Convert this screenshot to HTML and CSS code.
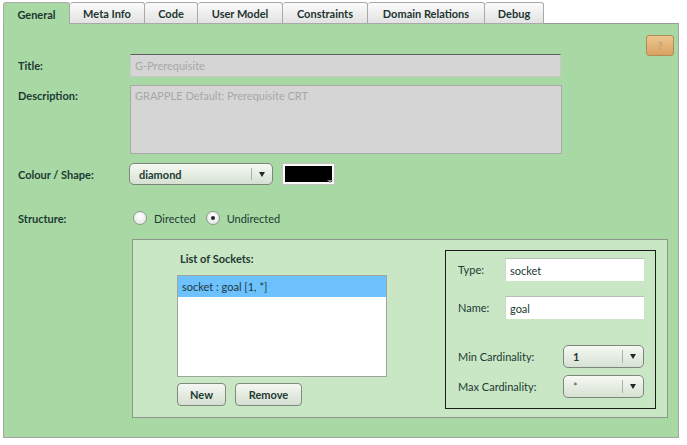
FILE: index.html
```html
<!DOCTYPE html>
<html>
<head>
<meta charset="utf-8">
<link rel="stylesheet" href="styles.css">
</head>
<body>
<div class="tabs">
  <div class="tab active t-general">General</div>
  <div class="tab t-meta">Meta Info</div>
  <div class="tab t-code">Code</div>
  <div class="tab t-um">User Model</div>
  <div class="tab t-con">Constraints</div>
  <div class="tab t-dom">Domain Relations</div>
  <div class="tab t-debug">Debug</div>
</div>
<div class="panel">
  <div class="toolbar"><div class="help">?</div></div>
  <div class="row row-title">
    <div class="label">Title:</div>
    <div class="input disabled title-input">G-Prerequisite</div>
  </div>
  <div class="row row-desc">
    <div class="label label-top">Description:</div>
    <div class="textarea disabled">GRAPPLE Default: Prerequisite CRT</div>
  </div>
  <div class="row row-colour">
    <div class="label">Colour / Shape:</div>
    <div class="colour-field">
      <div class="dropdown shape-dd"><span class="dd-value">diamond</span><span class="dd-arrow"><i class="tri"></i></span></div>
      <div class="swatch"><i class="swatch-tri"></i></div>
    </div>
  </div>
  <div class="row row-struct">
    <div class="label">Structure:</div>
    <div class="radios">
      <span class="radio"></span><span class="radio-label">Directed</span>
      <span class="radio checked"></span><span class="radio-label">Undirected</span>
    </div>
  </div>
  <div class="inner">
    <div class="sockets">
      <div class="sockets-title">List of Sockets:</div>
      <div class="listbox">
        <div class="list-item selected">socket : goal [1, *]</div>
      </div>
      <div class="buttons">
        <div class="btn btn-new">New</div>
        <div class="btn btn-remove">Remove</div>
      </div>
    </div>
    <div class="props">
      <div class="prop-row">
        <div class="prop-label">Type:</div>
        <div class="input white">socket</div>
      </div>
      <div class="prop-row row-name">
        <div class="prop-label">Name:</div>
        <div class="input white">goal</div>
      </div>
      <div class="card-row row-min">
        <div class="prop-label">Min Cardinality:</div>
        <div class="dropdown card-dd"><span class="dd-value">1</span><span class="dd-arrow"><i class="tri"></i></span></div>
      </div>
      <div class="card-row row-max">
        <div class="prop-label">Max Cardinality:</div>
        <div class="dropdown card-dd"><span class="dd-value star">*</span><span class="dd-arrow"><i class="tri"></i></span></div>
      </div>
    </div>
  </div>
</div>
</body>
</html>
```

FILE: styles.css
```css
* { box-sizing: border-box; }
body {
  margin: 0;
  background: #ffffff;
  font-family: Lato, "Open Sans", "Liberation Sans", sans-serif;
  font-size: 11px;
  color: #1d3a32;
  width: 687px;
  height: 445px;
  overflow: hidden;
}
.tabs {
  display: flex;
  margin-left: 3px;
  margin-top: 2px;
  height: 21px;
  position: relative;
  z-index: 1;
}
.tab {
  height: 22px;
  border: 1px solid #a9a9a9;
  border-left: none;
  border-radius: 3px 3px 0 0;
  background: linear-gradient(#fbfbfb, #e2e2e2);
  font-weight: bold;
  font-size: 11px;
  color: #1d3530;
  display: flex;
  align-items: center;
  justify-content: center;
  padding-top: 1px;
}
.tab.active {
  background: #a8d9a5;
  border: 1px solid #a9a9a9;
  border-bottom: none;
  height: 22px;
}
.t-general { width: 67px; }
.t-meta { width: 75px; }
.t-code { width: 53px; }
.t-um { width: 85px; }
.t-con { width: 85px; }
.t-dom { width: 117px; }
.t-debug { width: 59px; }

.panel {
  margin-left: 3px;
  width: 676px;
  height: 415px;
  background: #a8d9a5;
  border: 1px solid #a4a4a4;
  border-top-color: #999;
  padding: 11px 0 0 14px;
  display: flex;
  flex-direction: column;
}
.toolbar {
  display: flex;
  justify-content: flex-end;
  height: 21px;
  padding-right: 4px;
  margin-bottom: -2px;
}
.help {
  width: 28px;
  height: 21px;
  border: 1px solid #b48a55;
  border-radius: 3px;
  background: linear-gradient(#ecc690, #d9a261);
  color: #a39a8a;
  font-size: 9px;
  display: flex;
  align-items: center;
  justify-content: center;
}
.row {
  display: grid;
  grid-template-columns: 112px 1fr;
  align-items: center;
}
.label {
  font-weight: bold;
  color: #1d3a32;
}
.label-top { align-self: start; padding-top: 4px; }
.input {
  height: 23px;
  display: flex;
  align-items: center;
  padding-left: 4px;
}
.disabled {
  background: #d5d5d5;
  color: #a8a8a8;
}
.title-input {
  width: 431px;
  border-top: 1px solid #5d5d5d;
  border-left: 1px solid #c8c8c8;
  border-right: 1px solid #c8c8c8;
  border-bottom: 1px solid #c8c8c8;
}
.row-desc { margin-top: 8px; }
.textarea {
  width: 432px;
  height: 69px;
  border: 1px solid #a9a9a9;
  padding: 3px 4px;
}
.row-colour { margin-top: 9px; }
.colour-field {
  display: flex;
  align-items: center;
  gap: 10px;
  margin-left: -1px;
}
.dropdown {
  display: flex;
  align-items: stretch;
  border: 1px solid #7d867b;
  border-radius: 5px;
  background: linear-gradient(#f6f9f4, #d6e1d2);
  height: 22px;
  font-weight: bold;
  color: #1d3a32;
}
.dd-value {
  flex: 1;
  display: flex;
  align-items: center;
  padding-left: 9px;
}
.dd-arrow {
  width: 21px;
  display: flex;
  align-items: center;
  justify-content: center;
  position: relative;
}
.dd-arrow::before {
  content: "";
  position: absolute;
  left: 0;
  top: 4px;
  bottom: 4px;
  border-left: 1px solid #aab3a7;
}
.tri {
  width: 0;
  height: 0;
  border-left: 3.5px solid transparent;
  border-right: 3.5px solid transparent;
  border-top: 5px solid #1f2a26;
  margin-left: 1px;
}
.shape-dd { width: 144px; }
.swatch {
  width: 51px;
  height: 20px;
  background: #000;
  border: 2px solid #fafafa;
  outline: 1px solid #c2c2c2;
  position: relative;
}
.swatch-tri {
  position: absolute;
  right: -1px;
  bottom: -1px;
  width: 0;
  height: 0;
  border-left: 3px solid transparent;
  border-right: 3px solid transparent;
  border-top: 3px solid #888;
}
.row-struct { margin-top: 24px; }
.radios {
  display: flex;
  align-items: center;
  height: 18px;
  padding-left: 3px;
}
.radio {
  width: 14px;
  height: 14px;
  border-radius: 50%;
  border: 1px solid #8f978d;
  background: radial-gradient(circle at 50% 35%, #ffffff, #dfe3de);
  display: flex;
  align-items: center;
  justify-content: center;
}
.radio.checked::after {
  content: "";
  width: 4px;
  height: 4px;
  border-radius: 50%;
  background: #1f2a26;
}
.radio-label {
  margin-left: 7px;
  margin-right: 10px;
  color: #1d3a32;
}
.inner {
  margin-top: 12px;
  margin-left: 114px;
  width: 536px;
  height: 179px;
  background: #c9e6c5;
  border: 1px solid #8f958e;
  display: flex;
  justify-content: space-between;
  padding: 10px 11px 8px 44px;
}
.sockets {
  display: flex;
  flex-direction: column;
  width: 210px;
}
.sockets-title {
  font-weight: bold;
  padding-left: 3px;
  height: 23px;
  margin-top: 2px;
}
.listbox {
  height: 102px;
  background: #fff;
  border: 1px solid #9ea59c;
}
.list-item {
  height: 21px;
  display: flex;
  align-items: center;
  padding-left: 4px;
  color: #1d3a45;
}
.list-item.selected { background: #6dc1fd; }
.buttons {
  display: flex;
  gap: 9px;
  margin-top: 6px;
}
.btn {
  height: 23px;
  border: 1px solid #80897e;
  border-radius: 4px;
  background: linear-gradient(#f4f7f2, #d5dfd1);
  font-weight: bold;
  color: #1d3a32;
  display: flex;
  align-items: center;
  justify-content: center;
}
.btn-new { width: 49px; }
.btn-remove { width: 67px; }
.props {
  width: 211px;
  height: 159px;
  border: 1px solid #1c1c1c;
  padding: 7px 11px 0 12px;
  display: flex;
  flex-direction: column;
}
.prop-row {
  display: flex;
  align-items: center;
  justify-content: space-between;
}
.prop-label { color: #1d3a32; }
.white {
  width: 139px;
  background: #fff;
  border-top: 1px solid #b8c0b5;
  border-left: 1px solid #d0d6ce;
  color: #1d3a32;
}
.row-name { margin-top: 15px; }
.card-row {
  display: flex;
  align-items: center;
  justify-content: space-between;
}
.row-min { margin-top: 26px; }
.row-max { margin-top: 7px; }
.card-dd { width: 81px; height: 23px; }
.star { font-weight: normal; color: #555; }
```
